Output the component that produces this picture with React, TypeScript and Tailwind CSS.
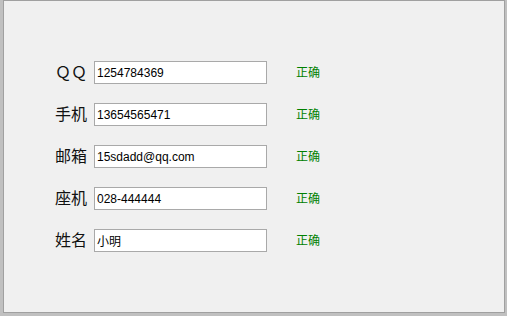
import React from 'react';

const rows = [
  { label: 'ＱＱ', value: '1254784369' },
  { label: '手机', value: '13654565471' },
  { label: '邮箱', value: '15sdadd@qq.com' },
  { label: '座机', value: '028-444444' },
  { label: '姓名', value: '小明' },
];

export default function App() {
  return (
    <div className="w-[507px] h-[316px] bg-[#c0c0c0] pl-[3px] pr-[2px] pb-[3px]">
      {/* 表单面板 */}
      <div
        className="h-full border border-[#a0a0a0] bg-[#f0f0f0] pt-[60px] pl-[48px] flex flex-col gap-[19px]"
        style={{ fontFamily: '"Liberation Sans", Arial, "Noto Sans CJK SC", sans-serif' }}
      >
        {rows.map((row) => (
          <div key={row.label} className="flex items-center h-[23px]">
            <span className="w-[35px] text-right text-[16px] leading-none text-[#111] mr-[7px] whitespace-nowrap">
              {row.label}
            </span>
            <input
              readOnly
              value={row.value}
              className="w-[173px] h-[23px] border border-[#a9a9a9] bg-white px-[2px] text-[12px] text-black outline-none"
              style={{ fontFamily: '"Liberation Sans", Arial, "Noto Sans CJK SC", sans-serif' }}
            />
            <span className="ml-[29px] text-[12px] text-[#008000]">正确</span>
          </div>
        ))}
      </div>
    </div>
  );
}
